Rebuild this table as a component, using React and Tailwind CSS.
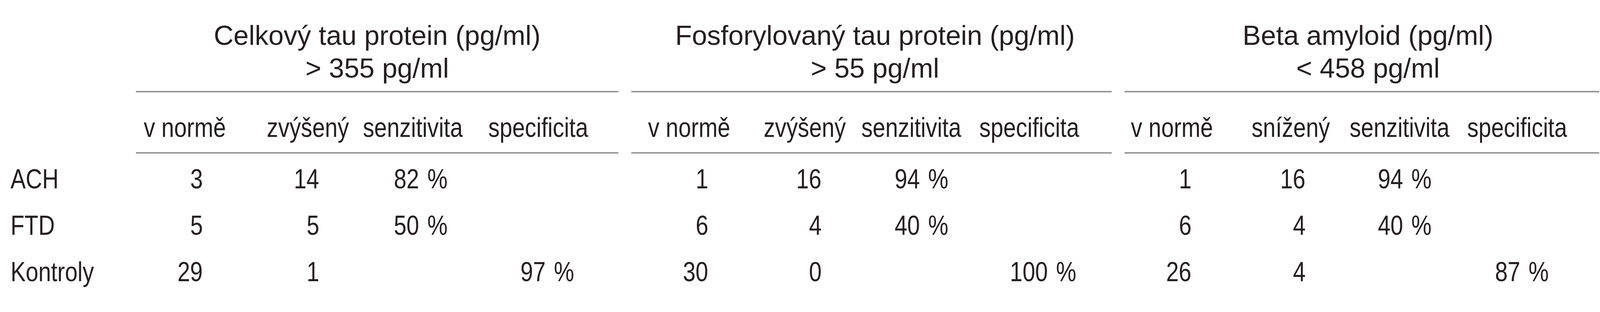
const rows = [
  { label: "ACH", h: "h-[117px] leading-[117px]" },
  { label: "FTD", h: "h-[121px] leading-[121px]" },
  { label: "Kontroly", h: "h-[117px] leading-[117px]" },
];

const groups = [
  {
    title: "Celkový tau protein (pg/ml)",
    limit: "> 355 pg/ml",
    w: "w-[1235px]",
    titlePad: "pl-0",
    cols: [
      { label: "v normě", w: "w-[335px]", hp: "pl-[20px]", np: "pr-[164px]" },
      { label: "zvýšený", w: "w-[246px]", hp: "pl-0", np: "pr-[112px]" },
      { label: "senzitivita", w: "w-[321px]", hp: "pl-0", np: "pr-[104px]" },
      { label: "specificita", w: "w-[333px]", hp: "pl-0", np: "pr-[113px]" },
    ],
    data: [
      ["3", "14", "82 %", ""],
      ["5", "5", "50 %", ""],
      ["29", "1", "", "97 %"],
    ],
  },
  {
    title: "Fosforylovaný tau protein (pg/ml)",
    limit: "> 55 pg/ml",
    w: "w-[1230px]",
    titlePad: "pl-[18px]",
    cols: [
      { label: "v normě", w: "w-[339px]", hp: "pl-[43px]", np: "pr-[142px]" },
      { label: "zvýšený", w: "w-[250px]", hp: "pl-0", np: "pr-[102px]" },
      { label: "senzitivita", w: "w-[302px]", hp: "pl-0", np: "pr-[79px]" },
      { label: "specificita", w: "w-[339px]", hp: "pl-0", np: "pr-[91px]" },
    ],
    data: [
      ["1", "16", "94 %", ""],
      ["6", "4", "40 %", ""],
      ["30", "0", "", "100 %"],
    ],
  },
  {
    title: "Beta amyloid (pg/ml)",
    limit: "< 458 pg/ml",
    w: "w-[1215px]",
    titlePad: "pl-[31px]",
    cols: [
      { label: "v normě", w: "w-[325px]", hp: "pl-[16px]", np: "pr-[154px]" },
      { label: "snížený", w: "w-[251px]", hp: "pl-0", np: "pr-[113px]" },
      { label: "senzitivita", w: "w-[301px]", hp: "pl-0", np: "pr-[91px]" },
      { label: "specificita", w: "w-[338px]", hp: "pl-0", np: "pr-[129px]" },
    ],
    data: [
      ["1", "16", "94 %", ""],
      ["6", "4", "40 %", ""],
      ["26", "4", "", "87 %"],
    ],
  },
];

// narrow face is not installed, so squeeze Liberation Sans like Arial Narrow
function Narrow({ children, right }) {
  return (
    <span className={`inline-block scale-x-[0.82] whitespace-nowrap ${right ? "origin-right" : "origin-left"}`}>
      {children}
    </span>
  );
}

function Group({ g }) {
  return (
    <div className={`${g.w} shrink-0 pt-[49px]`}>
      <div className={`text-center text-[70px] leading-[84px] whitespace-nowrap ${g.titlePad}`}>
        <div>{g.title}</div>
        <div>{g.limit}</div>
      </div>
      <div className="mt-[16px] h-[4px] bg-[#999999]" />
      <div className="mt-[50px] flex h-[80px] leading-[80px] text-[71px]">
        {g.cols.map((c) => (
          <div key={c.label} className={`${c.w} ${c.hp} shrink-0 whitespace-nowrap`}>
            <Narrow>{c.label}</Narrow>
          </div>
        ))}
      </div>
      <div className="mt-[23px] h-[4px] bg-[#999999]" />
      <div className="mt-[6px] text-[71px] [word-spacing:6px]">
        {g.data.map((r, i) => (
          <div key={i} className={`flex ${rows[i].h}`}>
            {r.map((v, j) => (
              <div key={j} className={`${g.cols[j].w} ${g.cols[j].np} shrink-0 text-right whitespace-nowrap`}>
                {v && <Narrow right>{v}</Narrow>}
              </div>
            ))}
          </div>
        ))}
      </div>
    </div>
  );
}

export default function App() {
  return (
    <div className="flex h-[800px] w-[4126px] bg-white text-[#231f20] font-['Liberation_Sans',Arial,sans-serif]">
      <div className="w-[348px] shrink-0 pl-[27px] pt-[400px] text-[71px]">
        {rows.map((r) => (
          <div key={r.label} className={r.h}>
            <Narrow>{r.label}</Narrow>
          </div>
        ))}
      </div>
      <Group g={groups[0]} />
      <div className="w-[33px] shrink-0" />
      <Group g={groups[1]} />
      <div className="w-[33px] shrink-0" />
      <Group g={groups[2]} />
    </div>
  );
}
